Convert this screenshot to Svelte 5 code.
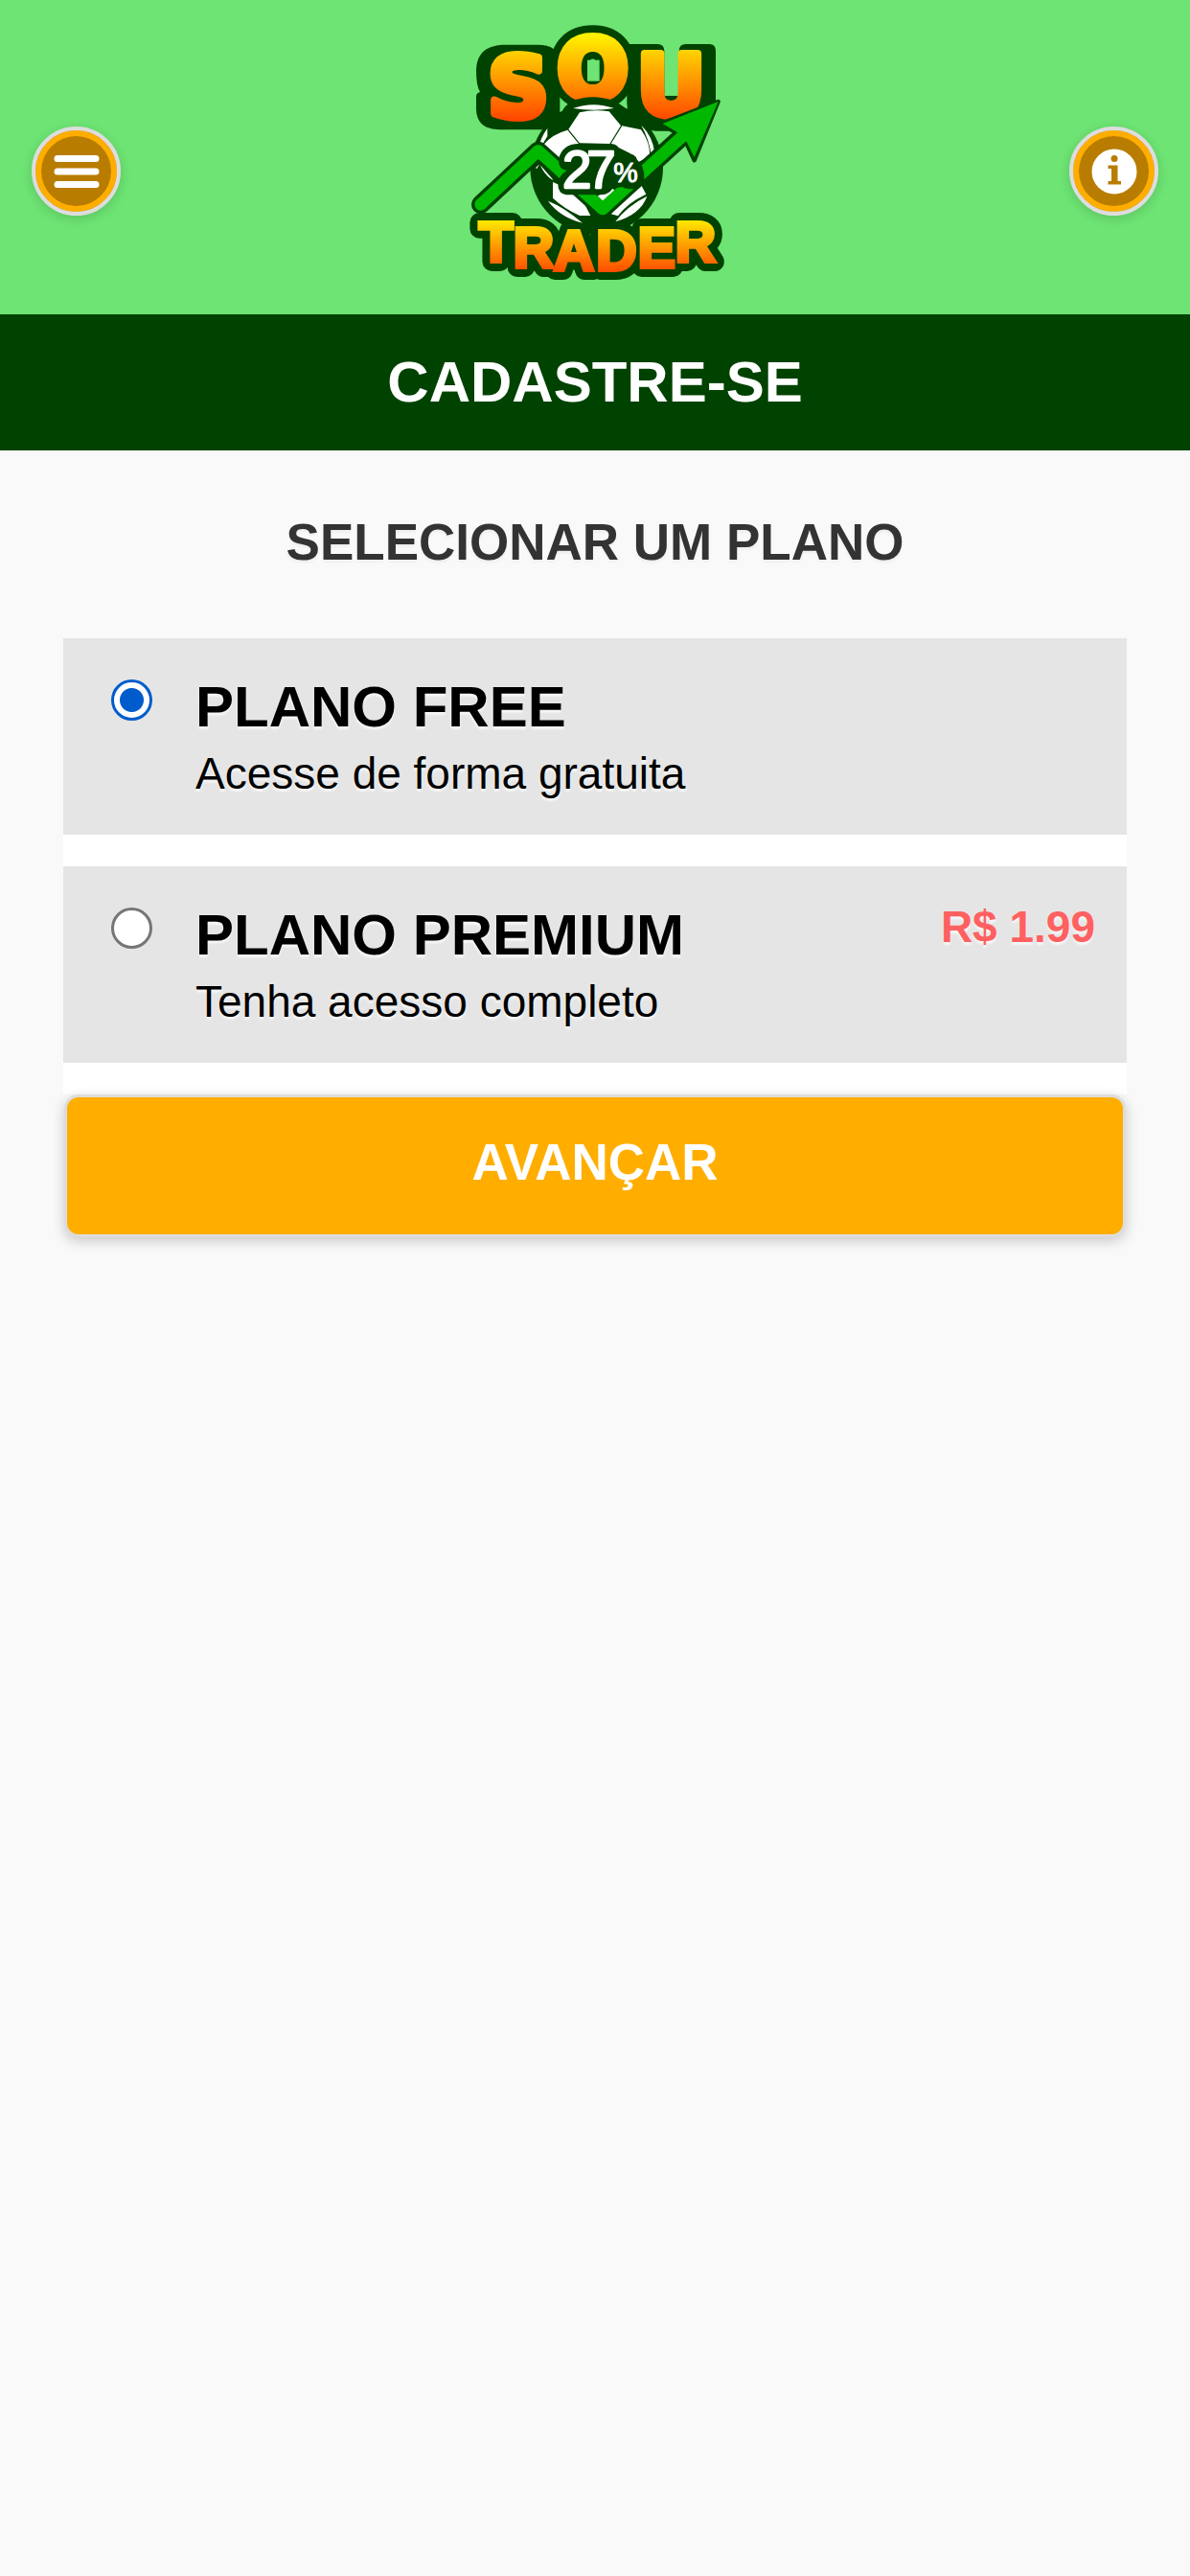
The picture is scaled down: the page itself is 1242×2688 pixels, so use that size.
<script>
  const plans = [
    { id: 'free', name: 'PLANO FREE', detail: 'Acesse de forma gratuita', price: '' },
    { id: 'premium', name: 'PLANO PREMIUM', detail: 'Tenha acesso completo', price: 'R$ 1.99' }
  ];
  let selected = $state('free');
</script>

{#snippet sou()}
  <text x="115" y="336">S</text>
  <text x="331" y="279">O</text>
  <text x="581" y="331">U</text>
{/snippet}

{#snippet trader()}
  <text x="86" y="790">T</text>
  <text x="194" y="808">R</text>
  <text x="320" y="816">A</text>
  <text x="454" y="816">D</text>
  <text x="584" y="807">E</text>
  <text x="701" y="790">R</text>
{/snippet}

<header class="top">
  <button class="round" type="button" aria-label="Menu">
    <svg viewBox="0 0 48 48" aria-hidden="true">
      <path d="M4 10.500H44M4 24H44M4 37.500H44" fill="none" stroke="#fff" stroke-width="7" stroke-linecap="round" />
    </svg>
  </button>
  <svg class="logo" viewBox="0 0 900 900" role="img" aria-label="Sou Trader 27%">
    <defs>
      <linearGradient id="warm" gradientUnits="userSpaceOnUse" x1="0" y1="82" x2="0" y2="350">
        <stop offset="0" stop-color="#fff000" />
        <stop offset="1" stop-color="#ff4400" />
      </linearGradient>
      <linearGradient id="warm2" gradientUnits="userSpaceOnUse" x1="0" y1="660" x2="0" y2="825">
        <stop offset="0" stop-color="#ffe800" />
        <stop offset="1" stop-color="#ff4800" />
      </linearGradient>
    </defs>
    <g fill="#004200" stroke="#004200" stroke-linejoin="round">
      <circle cx="455" cy="495" r="208" stroke="none" />
      <path stroke="none" d="M160 110H270Q335 110 340 160V320Q335 376 265 376H150Q78 374 78 310V272Q78 262 90 258Q78 240 78 190Q80 115 160 110Z" />
      <path stroke="none" d="M550 108H645Q667 108 667 130V270H713V130Q713 108 735 108H808Q828 108 828 130V290L700 380H640Q550 370 550 290Z" />
      <g class="wide" stroke-width="70"><text x="331" y="279">O</text></g>
      <g class="narrow" stroke-width="60">{@render trader()}</g>
    </g>
    <g class="wide" fill="url(#warm)" stroke="url(#warm)" stroke-width="24" stroke-linejoin="round">{@render sou()}</g>
    <rect x="426" y="158" width="38" height="66" fill="#6de473" />
    <path d="M352 310Q376 276 443 274Q510 276 545 310L600 390H310Z" fill="#004200" />
    <g fill="#fff">
      <path d="M381 309Q445 286 510 309Q445 320 381 309Z" />
      <path d="M402 322Q445 312 494 319L531 363L496 420L402 418L367 375Z" />
      <path d="M364 377L399 420L350 440L340 480L288 424Q315 390 364 377Z" />
      <path d="M535 364L594 376Q622 415 622 458L585 478L560 450L500 420Z" />
      <path d="M301 372V396L288 418L278 416Q284 395 301 372Z" />
      <path d="M595 362Q630 396 637 448L626 455Q620 408 595 362Z" />
      <path d="M278 486L320 534L312 530Q290 514 278 486ZM264 496L276 484L268 498Z" />
      <path d="M318 540L400 575L436 645L402 645Q352 622 318 590Z" />
      <path d="M303 599Q352 618 411 668Q340 650 303 599Z" />
      <path d="M594 548L610 578Q550 606 522 646L500 640L550 580Z" />
      <path d="M613 584Q593 641 514 664Q550 615 613 584Z" />
    </g>
    <path d="M92 610L272 442L474 624L724 396" fill="none" stroke="#004200" stroke-width="58" stroke-linecap="round" stroke-linejoin="round" />
    <path d="M458 584L500 555L520 575L476 600Z" fill="#fff" />
    <path d="M836 288L654 358L704 385L735 416L761 472Z" fill="#00b800" stroke="#004200" stroke-width="13" stroke-linejoin="round" />
    <path d="M92 610L272 442L474 624L730 391" fill="none" stroke="#00b800" stroke-width="38" stroke-linejoin="round" />
    <circle cx="92" cy="610" r="19" fill="#00b800" />
    <path d="M836 288L662 357L704 382L737 414L761 462Z" fill="#00b800" />
    <path d="M358 432Q372 420 400 420Q425 420 437 428Q445 420 460 420H500Q528 422 528 450Q575 444 582 470Q606 490 604 530Q600 562 570 562Q545 562 535 555L505 560Q495 578 470 580H360Q333 575 334 545Q336 520 362 503Q335 500 336 470Q340 445 358 432Z" fill="#004200" />
    <text class="digits" x="348 424 508" y="558" font-size="164" fill="#fff" stroke="#fff" stroke-width="7" stroke-linejoin="round">27<tspan class="pct" y="540" font-size="86">%</tspan></text>
    <g class="narrow" fill="url(#warm2)" stroke="url(#warm2)" stroke-width="12">{@render trader()}</g>
  </svg>
  <button class="round" type="button" aria-label="Informações">
    <svg viewBox="0 0 48 48" aria-hidden="true">
      <circle cx="24" cy="24" r="23.500" fill="#fff" />
      <circle cx="24" cy="10.500" r="3.500" fill="#b87d00" />
      <path d="M17.500 17.500H27.500V34H31V37.500H17.500V34H21V21H17.500Z" fill="#b87d00" />
    </svg>
  </button>
</header>

<h1>CADASTRE-SE</h1>

<main>
  <h2 id="choose">SELECIONAR UM PLANO</h2>
  <form onsubmit={(e) => e.preventDefault()}>
    <div class="plans" role="radiogroup" aria-labelledby="choose">
      {#each plans as plan}
        <label class="plan">
          <input type="radio" name="plan" value={plan.id} bind:group={selected} />
          <span class="info">
            <strong>{plan.name}</strong>
            <span>{plan.detail}</span>
          </span>
          {#if plan.price}<b class="price">{plan.price}</b>{/if}
        </label>
      {/each}
    </div>
    <button class="next" type="submit">AVANÇAR</button>
  </form>
</main>

<style>
  :global(body) {
    margin: 0;
    background: #f9f9f9;
    font-family: "Liberation Sans", Arial, Helvetica, sans-serif;
  }
  .top {
    display: flex;
    justify-content: space-between;
    align-items: flex-start;
    padding: 10px 33px 18px;
    background: #6de473;
  }
  .logo {
    width: 300px;
    height: 300px;
  }
  .wide {
    font-family: "DejaVu Sans", sans-serif;
    font-size: 264px;
    font-weight: 700;
  }
  .narrow {
    font-size: 176px;
    font-weight: 700;
  }
  .pct {
    stroke-width: 3;
  }
  .round {
    box-sizing: border-box;
    display: grid;
    place-items: center;
    width: 93px;
    height: 93px;
    margin: 122px 0 0;
    padding: 0;
    border: 4px solid #ddd;
    border-radius: 50%;
    background: #b87d00;
    box-shadow: inset 0 0 0 6px #ffae00, 0 3px 12px rgba(0, 0, 0, 0.15);
  }
  .round svg {
    width: 48px;
    height: 48px;
  }
  h1, h2 {
    margin: 0;
    text-align: center;
    font-weight: 700;
  }
  h1 {
    background: #004200;
    color: #fff;
    font-size: 60px;
    line-height: 142px;
  }
  main {
    padding: 0 66px 40px;
  }
  h2 {
    padding: 58px 0 62px;
    color: #333;
    font-size: 53px;
    line-height: 76px;
    text-shadow: 0 3px 2px #f0f0f0;
  }
  .plans {
    display: grid;
    gap: 33px;
    padding-bottom: 33px;
    background: #fff;
  }
  .plan {
    box-sizing: border-box;
    display: flex;
    align-items: flex-start;
    min-height: 205px;
    padding: 36px 33px 31px 50px;
    background: #e5e5e5;
    color: #000;
    text-shadow: 0 3px 2px #f6f6f6;
  }
  .plan input {
    appearance: none;
    box-sizing: border-box;
    flex: none;
    width: 43px;
    height: 43px;
    margin: 7px 45px 0 0;
    border: 3px solid #767676;
    border-radius: 50%;
    background: #fff;
  }
  .plan input:checked {
    border-color: #005ccc;
    background: radial-gradient(circle, #005ccc 12px, #fff 13px);
  }
  .info {
    display: grid;
    flex: 1;
    font-size: 46px;
    line-height: 66px;
  }
  .info strong {
    font-size: 60px;
    line-height: 72px;
  }
  .price {
    color: #ff6060;
    font-size: 46px;
    line-height: 54px;
  }
  .next {
    box-sizing: border-box;
    display: block;
    width: calc(100% - 2px);
    margin: 0 1px;
    padding: 36px 0 43px;
    border: 3px solid #ddd;
    border-radius: 15px;
    background: #ffae00;
    box-shadow: 0 4px 14px rgba(0, 0, 0, 0.2);
    color: #fff;
    font: 700 53px/64px "Liberation Sans", Arial, Helvetica, sans-serif;
  }
</style>
